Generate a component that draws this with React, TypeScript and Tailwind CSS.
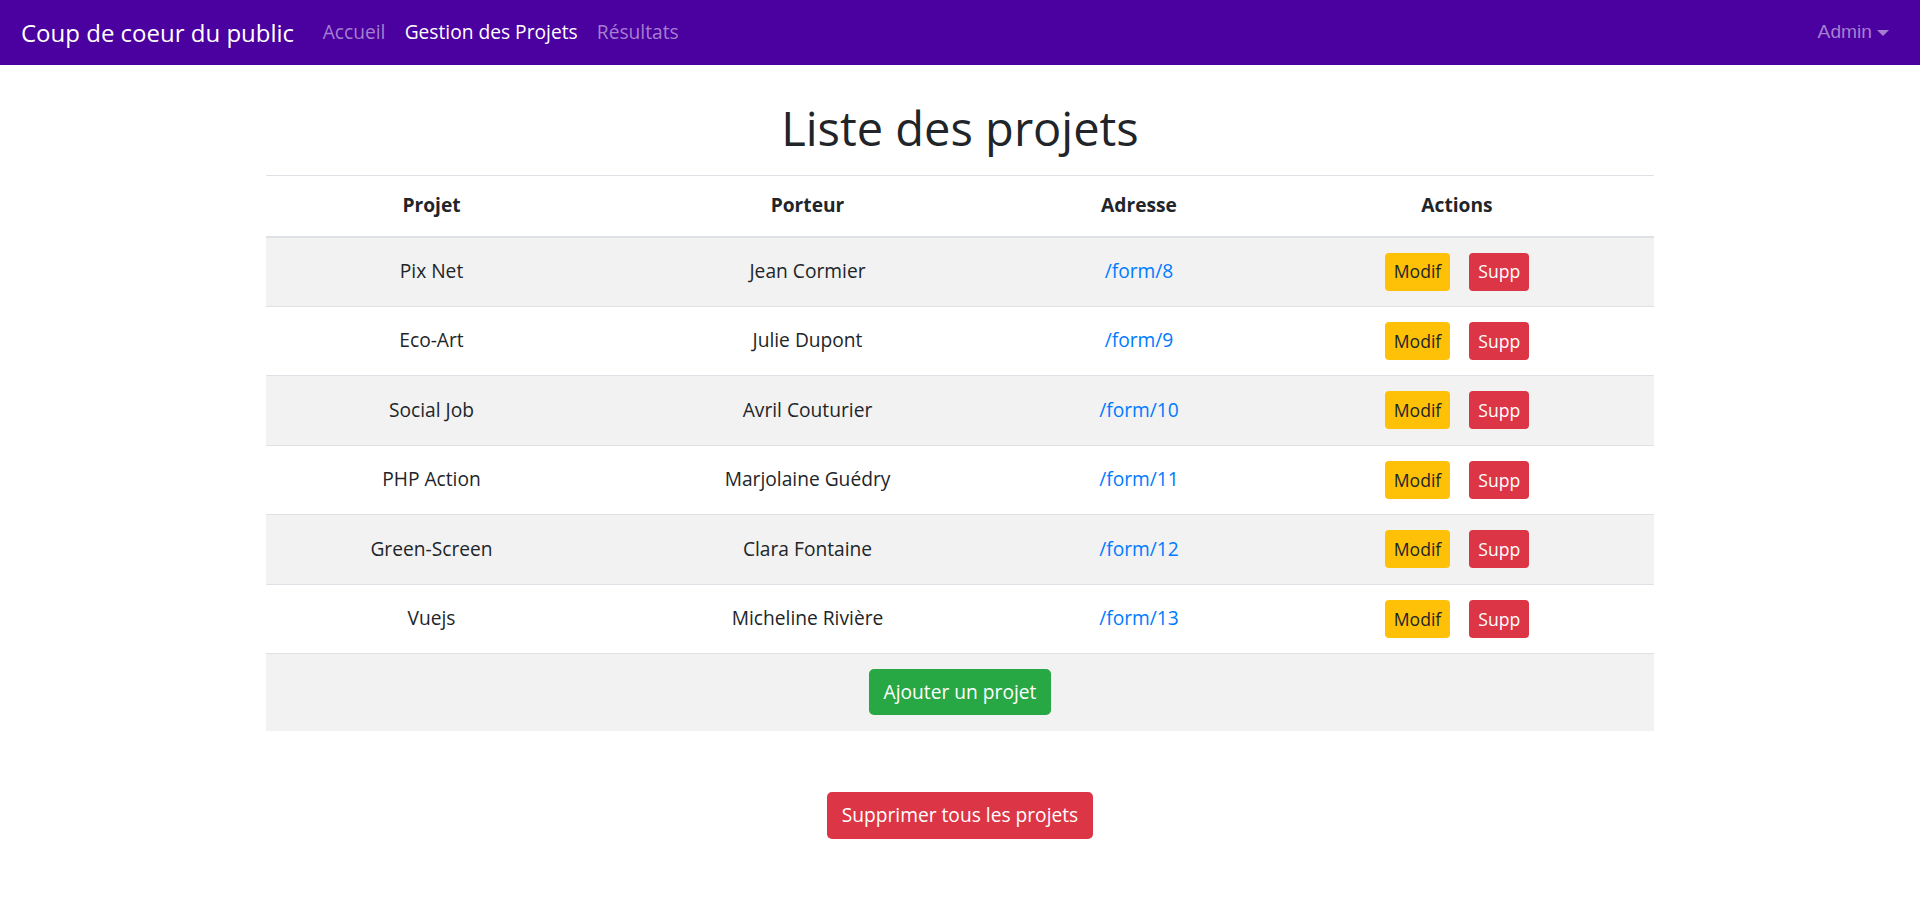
import React from "react";

interface Projet {
    id: number;
    nom: string;
    porteur: string;
}

const projets: Projet[] = [
    { id: 8, nom: "Pix Net", porteur: "Jean Cormier" },
    { id: 9, nom: "Eco-Art", porteur: "Julie Dupont" },
    { id: 10, nom: "Social Job", porteur: "Avril Couturier" },
    { id: 11, nom: "PHP Action", porteur: "Marjolaine Guédry" },
    { id: 12, nom: "Green-Screen", porteur: "Clara Fontaine" },
    { id: 13, nom: "Vuejs", porteur: "Micheline Rivière" },
];

const font = { fontFamily: '"Open Sans", "Noto Sans", sans-serif' };

function Navbar() {
    return (
        <nav className="h-[65px] bg-[#4b00a0] flex items-center px-[19px]">
            <a href="#" className="text-white text-[24px] mr-[19px] pl-[2px]">Coup de coeur du public</a>
            <div className="flex items-center text-[19.2px]">
                <a href="#" className="px-[9.6px] text-[#a57fcf]">Accueil</a>
                <a href="#" className="px-[9.6px] text-white">Gestion des Projets</a>
                <a href="#" className="px-[9.6px] text-[#a57fcf]">Résultats</a>
            </div>
            <div className="ml-auto pl-[9.6px] pr-[12px] flex items-center text-[19.2px] text-[#a57fcf] font-['Liberation_Sans',Arial,sans-serif]">
                Admin
                <span className="ml-[5px] mt-[2px] w-0 h-0 border-t-[6px] border-t-[#a57fcf] border-x-[6px] border-x-transparent" />
            </div>
        </nav>
    );
}

export default function App() {
    return (
        <div className="min-h-[905px] bg-white text-[#212529]" style={font}>
            <Navbar />

            <h1 className="text-center text-[47px] font-normal leading-[58px] mt-[34px] mb-[18px]">Liste des projets</h1>

            <table className="w-[1388px] mx-auto border-collapse text-[19.2px] text-center">
                <colgroup>
                    <col className="w-[331px]" />
                    <col className="w-[421px]" />
                    <col className="w-[242px]" />
                    <col className="w-[394px]" />
                </colgroup>
                <thead>
                    <tr className="border-t border-[#dee2e6] border-b-2 border-b-[#dee2e6]">
                        <th className="h-[61px] align-middle font-bold">Projet</th>
                        <th className="align-middle font-bold">Porteur</th>
                        <th className="align-middle font-bold">Adresse</th>
                        <th className="align-middle font-bold">Actions</th>
                    </tr>
                </thead>
                <tbody>
                    {projets.map((p, i) => (
                        <tr key={p.id} className={`border-b border-[#dee2e6] ${i % 2 === 0 ? "bg-[#f2f2f2]" : "bg-white"}`}>
                            <td className="h-[69.5px] align-middle">{p.nom}</td>
                            <td className="align-middle">{p.porteur}</td>
                            <td className="align-middle">
                                <a href="#" className="text-[#007bff]">/form/{p.id}</a>
                            </td>
                            <td className="align-middle">
                                <div className="flex items-center justify-center gap-[19px]">
                                    <button className="h-[38px] px-[9px] bg-[#ffc107] text-[#212529] text-[17.6px] rounded-[4px]">Modif</button>
                                    <button className="h-[38px] px-[9px] bg-[#dc3545] text-white text-[17.6px] rounded-[4px]">Supp</button>
                                </div>
                            </td>
                        </tr>
                    ))}
                    <tr className="bg-[#f2f2f2]">
                        <td colSpan={4} className="h-[77px] align-middle">
                            <button className="h-[46px] px-[14.4px] bg-[#28a745] text-white text-[19.2px] rounded-[5px]">Ajouter un projet</button>
                        </td>
                    </tr>
                </tbody>
            </table>

            <div className="flex justify-center mt-[61px]">
                <button className="h-[47px] px-[14.4px] bg-[#dc3545] text-white text-[19.2px] rounded-[5px]">Supprimer tous les projets</button>
            </div>
        </div>
    );
}
